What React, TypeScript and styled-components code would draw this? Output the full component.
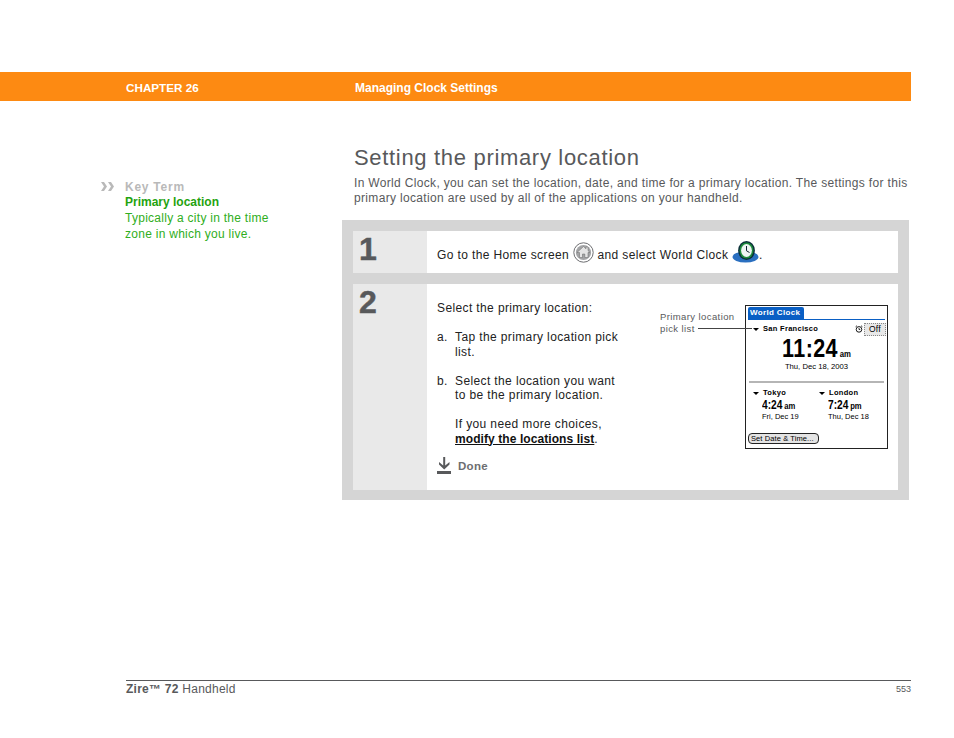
import React from 'react'
import styled, { createGlobalStyle } from 'styled-components'

const GlobalStyle = createGlobalStyle`
  html, body {
    margin: 0;
    padding: 0;
    background: #fff;
  }
  body {
    font-family: "Liberation Sans", Arial, sans-serif;
    color: #333;
  }
`

const Page = styled.div`
  width: 954px;
  height: 738px;
  display: flex;
  flex-direction: column;
  padding-top: 72px;
  box-sizing: border-box;
  overflow: hidden;
`

const HeaderBar = styled.header`
  width: 911px;
  height: 29px;
  background: #fd8a12;
  color: #fff;
  display: flex;
  align-items: center;
  padding: 2px 0 0 126px;
  box-sizing: border-box;
  font-size: 12px;
  font-weight: 700;
`

const Chapter = styled.div`
  width: 229px;
  font-size: 11.7px;
`

const Body = styled.div`
  display: flex;
  flex: 1;
  padding-top: 43px;
`

const Sidebar = styled.aside`
  width: 342px;
  padding: 36px 0 0 100px;
  box-sizing: border-box;
  display: flex;
  gap: 10px;
`

const Arrows = styled.svg`
  width: 15px;
  height: 11px;
  margin-top: 1px;
  flex: none;
`

const Note = styled.div`
  font-size: 12px;
  line-height: 16px;
  color: #2fae21;
  letter-spacing: 0.27px;
`

const NoteLabel = styled.div`
  color: #b9b9b9;
  font-weight: 700;
  letter-spacing: 0.75px;
  line-height: 15px;
`

const NoteTerm = styled.div`
  color: #1fa30f;
  font-weight: 700;
  line-height: 15px;
  letter-spacing: 0;
`

const Main = styled.main`
  width: 567px;
`

const Title = styled.h1`
  margin: 0 0 0 12px;
  font-size: 22px;
  line-height: 27px;
  font-weight: 400;
  color: #58595b;
  letter-spacing: 0.68px;
`

const Intro = styled.p`
  margin: 5px 0 0 12px;
  width: 556px;
  font-size: 12px;
  line-height: 15px;
  color: #58595b;
  letter-spacing: 0.33px;
  white-space: nowrap;
`

const StepPanel = styled.div`
  margin-top: 14px;
  background: #d5d5d5;
  padding: 11px 11px 10px;
  display: flex;
  flex-direction: column;
  gap: 11px;
`

const StepRow = styled.div<{ $height: number }>`
  display: flex;
  height: ${p => p.$height}px;
  background: #fff;
`

const StepNumber = styled.div`
  width: 74px;
  flex: none;
  background: #e9e9e9;
  color: #58595b;
  font-size: 32px;
  font-weight: 700;
  line-height: 36px;
  padding-left: 6px;
  box-sizing: border-box;
  -webkit-text-stroke: 0.5px #58595b;
`

const StepContent = styled.div`
  flex: 1;
  padding-left: 10px;
  font-size: 12px;
  line-height: 14.5px;
  color: #222;
  letter-spacing: 0.38px;
`

const InlineLine = styled.div`
  display: flex;
  align-items: flex-end;
  height: 31px;
  white-space: pre;
`

const InlineIcon = styled.svg`
  flex: none;
  margin-bottom: -1px;
`

const StepColumns = styled.div`
  display: flex;
  padding-top: 17px;
`

const Instructions = styled.div`
  width: 223px;
  flex: none;
`

const Para = styled.p`
  margin: 0 0 14.5px;
`

const ListItem = styled.div`
  display: flex;
  margin-bottom: 14.5px;
`

const Letter = styled.span`
  width: 18px;
  flex: none;
`

const Indented = styled.div`
  margin-left: 18px;
  margin-bottom: 11px;
`

const StrongLink = styled.a`
  font-weight: 700;
  color: #111;
  text-decoration: underline;
  letter-spacing: 0.08px;
`

const DoneRow = styled.div`
  display: flex;
  align-items: center;
  gap: 6px;
  color: #6d6e71;
  font-weight: 700;
  font-size: 11.5px;
  letter-spacing: 0.3px;
`

const Figure = styled.div`
  position: relative;
  display: flex;
  margin-top: 4px;
`

const Caption = styled.div`
  width: 85px;
  margin-top: 6px;
  font-size: 9.5px;
  line-height: 12px;
  color: #58595b;
  letter-spacing: 0.4px;
`

const Leader = styled.div`
  position: absolute;
  left: 38px;
  top: 23px;
  width: 54px;
  height: 1px;
  background: #444;
`

const Screen = styled.div`
  width: 143px;
  height: 144px;
  border: 1px solid #222;
  box-sizing: border-box;
  padding: 1px 2px;
  font-family: "Liberation Sans", Arial, sans-serif;
  color: #000;
  display: flex;
  flex-direction: column;
  letter-spacing: 0;
`

const TitleBar = styled.div`
  border-bottom: 1px solid #0a5fc4;
  height: 12px;
`

const ScreenTab = styled.div`
  width: 56px;
  height: 12px;
  background: #0a5fc4;
  color: #fff;
  font-size: 8px;
  line-height: 12px;
  font-weight: 700;
  padding-left: 2px;
  box-sizing: border-box;
  border-radius: 2px 2px 0 0;
  letter-spacing: 0.35px;
`

const CityLine = styled.div`
  display: flex;
  align-items: center;
  height: 12px;
  margin-top: 3px;
  padding-left: 5px;
  font-size: 7.5px;
  font-weight: 700;
  letter-spacing: 0.3px;
`

const Caret = styled.span`
  width: 0;
  height: 0;
  border-left: 3px solid transparent;
  border-right: 3px solid transparent;
  border-top: 3px solid #000;
  margin-right: 4px;
  flex: none;
`

const AlarmBox = styled.div`
  margin-left: auto;
  display: flex;
  align-items: center;
  gap: 1px;
  margin-right: -1px;
  font-weight: 400;
`

const OffBox = styled.span`
  width: 22px;
  height: 13px;
  border: 1px dotted #888;
  box-sizing: border-box;
  background: #e8e8e8;
  font-size: 8.5px;
  line-height: 11px;
  text-align: center;
`

const BigClock = styled.div`
  display: flex;
  justify-content: center;
  align-items: baseline;
  height: 24px;
  margin-top: 1px;
  font-size: 25px;
  line-height: 24px;
  font-weight: 700;
  transform: scaleX(0.86);
  letter-spacing: 0.5px;
`

const Meridiem = styled.span<{ $size: number }>`
  font-size: ${p => p.$size}px;
  margin-left: 2px;
  letter-spacing: 0;
`

const DateLine = styled.div`
  margin-top: 2px;
  text-align: center;
  font-size: 7.7px;
  line-height: 10px;
`

const Divider = styled.div`
  height: 2px;
  margin: 9px 1px 0 1px;
  background: #b5b5b5;
`

const Cities = styled.div`
  display: flex;
  margin-top: 1px;
`

const CityColumn = styled.div`
  width: 66px;
`

const SmallClock = styled.div`
  padding-left: 14px;
  height: 13px;
  font-size: 12px;
  line-height: 13px;
  font-weight: 700;
  transform-origin: 14px 0;
  transform: scaleX(0.85);
`

const CityDate = styled.div`
  padding-left: 14px;
  font-size: 7.5px;
  line-height: 10px;
`

const SetButton = styled.div`
  width: 71px;
  height: 11px;
  margin-top: auto;
  margin-bottom: 3px;
  border: 1px solid #222;
  border-radius: 4px;
  background: #e4e4e4;
  box-sizing: border-box;
  font-size: 7.5px;
  line-height: 9px;
  padding-left: 2px;
  letter-spacing: 0.1px;
`

const Footer = styled.footer`
  margin: 0 0 42px 126px;
  width: 785px;
  border-top: 1px solid #58595b;
  height: 15px;
  display: flex;
  align-items: flex-end;
  justify-content: space-between;
  color: #58595b;
  font-size: 12px;
  line-height: 14px;
  letter-spacing: 0.25px;
`

const PageNumber = styled.span`
  font-size: 9px;
  letter-spacing: 0;
`

const HomeIcon = () => (
  <InlineIcon width="21" height="21" viewBox="0 0 21 21">
    <circle cx="10.5" cy="10.5" r="9.7" fill="#fff" stroke="#6d6e71" strokeWidth="1" />
    <circle cx="10.5" cy="10.5" r="7.6" fill="#a3a4a6" />
    <path d="M4 10.5 L10.5 4.5 L13 6.8 L13 5 L15 5 L15 8.6 L17 10.5 L15 10.5 L15 15.5 L11.8 15.5 L11.8 12 L9.5 12 L9.5 15.5 L6.5 15.5 L6.5 10.5 Z" fill="#e4e4e4" stroke="#666" strokeWidth="0.5" />
  </InlineIcon>
)

const WorldClockIcon = () => (
  <InlineIcon width="27" height="22" viewBox="0 0 27 22">
    <ellipse cx="13.5" cy="16" rx="13" ry="5.5" fill="#2a6fc0" />
    <ellipse cx="14.5" cy="9.5" rx="8.4" ry="9.5" fill="#0b2f3a" />
    <ellipse cx="14.5" cy="9.5" rx="7" ry="8" fill="#1d8a3c" />
    <ellipse cx="14.5" cy="9.5" rx="5.4" ry="6.4" fill="#eef4f4" />
    <path d="M14.5 5 V9.8 L17.5 11.5" fill="none" stroke="#123" strokeWidth="1" />
  </InlineIcon>
)

const DoneArrow = () => (
  <svg width="15" height="18" viewBox="0 0 15 18">
    <path d="M6.2 0 H8.2 V8.5 L12.5 5 V7.6 L7.2 12.5 L2 7.6 V5 L6.2 8.5 Z" fill="#58595b" />
    <rect x="0" y="14" width="14" height="3" fill="#58595b" />
  </svg>
)

const AlarmIcon = () => (
  <svg width="8" height="8" viewBox="0 0 8 8">
    <circle cx="4" cy="4.4" r="2.8" fill="none" stroke="#000" strokeWidth="0.9" />
    <path d="M4 3 V4.5 H5.2 M0.6 1.8 L2 0.7 M7.4 1.8 L6 0.7" fill="none" stroke="#000" strokeWidth="0.8" />
  </svg>
)

export default function App() {
  return (
    <Page>
      <GlobalStyle />
      <HeaderBar>
        <Chapter>CHAPTER 26</Chapter>
        <div>Managing Clock Settings</div>
      </HeaderBar>
      <Body>
        <Sidebar>
          <Arrows viewBox="0 0 15 11">
            <path d="M1 1 H4 L7 5.5 L4 10 H1 L4 5.5 Z M8 1 H11 L14 5.5 L11 10 H8 L11 5.5 Z" fill="#b9b9b9" />
          </Arrows>
          <Note>
            <NoteLabel>Key Term</NoteLabel>
            <NoteTerm>Primary location</NoteTerm>
            Typically a city in the time
            <br />
            zone in which you live.
          </Note>
        </Sidebar>
        <Main>
          <Title>Setting the primary location</Title>
          <Intro>
            In World Clock, you can set the location, date, and time for a primary location. The settings for this
            <br />
            primary location are used by all of the applications on your handheld.
          </Intro>
          <StepPanel>
            <StepRow $height={42}>
              <StepNumber>1</StepNumber>
              <StepContent>
                <InlineLine>
                  Go to the Home screen <HomeIcon /> and select World Clock <WorldClockIcon />.
                </InlineLine>
              </StepContent>
            </StepRow>
            <StepRow $height={206}>
              <StepNumber>2</StepNumber>
              <StepContent>
                <StepColumns>
                  <Instructions>
                    <Para>Select the primary location:</Para>
                    <ListItem>
                      <Letter>a.</Letter>
                      <div>
                        Tap the primary location pick
                        <br />
                        list.
                      </div>
                    </ListItem>
                    <ListItem>
                      <Letter>b.</Letter>
                      <div>
                        Select the location you want
                        <br />
                        to be the primary location.
                      </div>
                    </ListItem>
                    <Indented>
                      If you need more choices,
                      <br />
                      <StrongLink>modify the locations list</StrongLink>.
                    </Indented>
                    <DoneRow>
                      <DoneArrow />
                      Done
                    </DoneRow>
                  </Instructions>
                  <Figure>
                    <Caption>
                      Primary location
                      <br />
                      pick list
                    </Caption>
                    <Leader />
                    <Screen>
                      <TitleBar>
                        <ScreenTab>World Clock</ScreenTab>
                      </TitleBar>
                      <CityLine>
                        <Caret />
                        San Francisco
                        <AlarmBox>
                          <AlarmIcon />
                          <OffBox>Off</OffBox>
                        </AlarmBox>
                      </CityLine>
                      <BigClock>
                        11:24<Meridiem $size={9}>am</Meridiem>
                      </BigClock>
                      <DateLine>Thu, Dec 18, 2003</DateLine>
                      <Divider />
                      <Cities>
                        <CityColumn>
                          <CityLine>
                            <Caret />
                            Tokyo
                          </CityLine>
                          <SmallClock>
                            4:24<Meridiem $size={9}>am</Meridiem>
                          </SmallClock>
                          <CityDate>Fri, Dec 19</CityDate>
                        </CityColumn>
                        <CityColumn>
                          <CityLine>
                            <Caret />
                            London
                          </CityLine>
                          <SmallClock>
                            7:24<Meridiem $size={9}>pm</Meridiem>
                          </SmallClock>
                          <CityDate>Thu, Dec 18</CityDate>
                        </CityColumn>
                      </Cities>
                      <SetButton>Set Date &amp; Time...</SetButton>
                    </Screen>
                  </Figure>
                </StepColumns>
              </StepContent>
            </StepRow>
          </StepPanel>
        </Main>
      </Body>
      <Footer>
        <span>
          <b>Zire™ 72</b> Handheld
        </span>
        <PageNumber>553</PageNumber>
      </Footer>
    </Page>
  )
}
